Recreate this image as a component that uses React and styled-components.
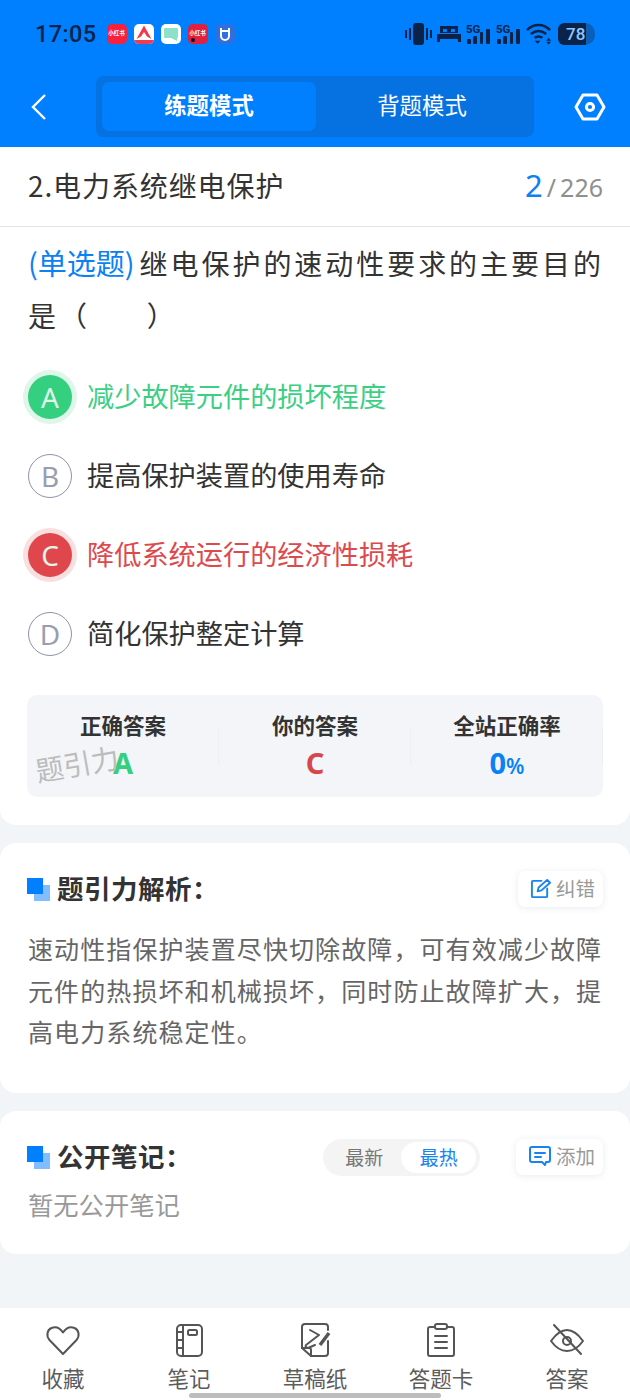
import React from "react";
import styled, { createGlobalStyle } from "styled-components";

const Global = createGlobalStyle`
  html, body { margin: 0; padding: 0; background: #f2f5f8; }
  * { box-sizing: border-box; }
  body { font-family: "Noto Sans", "Noto Sans CJK SC", sans-serif; }
`;
const Page = styled.div`
  width: 630px; height: 1400px; background: #f2f5f8; position: relative; overflow: hidden;
  display: flex; flex-direction: column;
`;
const Header = styled.header`
  background: #007fff; height: 147px; display: flex; flex-direction: column; flex: none;
`;
const StatusBar = styled.div`
  height: 76px; padding: 22px 35px 0 35px; display: flex; justify-content: space-between; align-items: flex-start;
`;
const Time = styled.span`
  font: 500 23.5px/24px "Roboto", sans-serif; color: #0b2348; letter-spacing: .4px; margin-right: 3px;
`;
const StatusLeft = styled.div`display: flex; align-items: center; height: 24px; gap: 7px;`;
const StatusRight = styled.div`display: flex; align-items: center; height: 24px; gap: 5px;`;
const AppIcon = styled.div`
  width: 20px; height: 20px; border-radius: 5px; background: ${p => p.$bg};
  display: flex; align-items: center; justify-content: center; overflow: hidden; position: relative;
  font: 700 5.5px/1 "Noto Sans CJK SC", sans-serif; color: #fff; white-space: nowrap; flex: none;
`;
const AppDot = styled.i`
  position: absolute; left: 3px; bottom: 2px; width: 4px; height: 4px; border-radius: 50%; background: #1a1020;
`;
const Battery = styled.div`
  width: 37px; height: 22px; border-radius: 6px 10px 10px 6px; margin-left: 1px; position: relative; overflow: hidden;
  background: #0a5fb8; color: #8ec8ff; display: flex; align-items: center;
  font: 500 17px/22px "Roboto", sans-serif; padding-left: 8px;
  &::before { content: ""; position: absolute; inset: 0 9px 0 0; background: #0b2348; border-radius: 6px 0 0 6px; }
  & > span { position: relative; }
`;
const NavRow = styled.div`
  height: 61px; display: flex; align-items: center; padding-left: 30px; padding-right: 24px;
`;
const BackBtn = styled.div`width: 66px; display: flex; flex: none;`;
const Segment = styled.div`
  width: 438px; height: 61px; background: #0671e0; border-radius: 8px; padding: 6px; display: flex; flex: none;
`;
const Tab = styled.div`
  flex: 0 0 ${p => p.$active ? "214px" : "212px"}; border-radius: 7px; background: ${p => p.$active ? "#007fff" : "transparent"};
  color: #fff; display: flex; align-items: center; justify-content: center; padding-bottom: 5px;
  font: ${p => p.$active ? 700 : 400} 22.4px/1 "Noto Sans CJK SC", sans-serif;
`;
const SettingBtn = styled.div`margin-left: auto; display: flex;`;

const Card = styled.section`
  background: #fff; border-radius: ${p => p.$top ? "0 0 16px 16px" : "16px"};
  flex: none; height: ${p => p.$h}px; margin-bottom: 18px; position: relative;
`;
const TitleRow = styled.div`
  height: 80px; padding: 0 27px 3px 28px; border-bottom: 1px solid #e3e3e3;
  display: flex; justify-content: space-between; align-items: center;
`;
const Title = styled.h1`
  margin: 0; font: 400 28px/1 "Noto Sans CJK SC", sans-serif; color: #333; letter-spacing: .9px;
`;
const Counter = styled.div`
  display: flex; align-items: baseline; color: #8f8f8f; font: 400 25px/1 "Noto Sans", sans-serif;
  b { font-weight: 400; font-size: 31px; color: #0a82f5; margin-right: 4px; }
  i { font-style: normal; margin-right: 4px; }
`;
const Question = styled.div`
  margin: 9px 0 0; padding: 0 20px 0 28px; font: 400 28px/53px "Noto Sans CJK SC", sans-serif; color: #333; letter-spacing: 2.95px;
`;
const QuestionLine = styled.div`height: 53px; white-space: nowrap;`;
const QuestionTag = styled.span`
  color: #0a82f5; letter-spacing: 0; margin-right: 5px; font-size: 29px;
`;
const QuestionBlank = styled.span`letter-spacing: 1.3px;`;
const Options = styled.div`
  display: flex; flex-direction: column; gap: 35px; margin-top: 33px; padding-left: 28px;
`;
const Option = styled.div`
  display: flex; align-items: center; gap: 15px; height: 44px; color: ${p => p.$color || "#333"};
  font: 400 27.2px/44px "Noto Sans CJK SC", sans-serif;
`;
const OptionText = styled.span`padding-bottom: 4px;`;
const Letter = styled.div`
  width: 44px; height: 44px; border-radius: 50%; flex: none; display: flex; align-items: center; justify-content: center;
  font: 400 28px/1 "Noto Sans", sans-serif;
  color: ${p => p.$fill ? "#dff5e8" : "#9a9db0"};
  background: ${p => p.$fill || "#fff"};
  border: ${p => p.$fill ? "none" : "1.5px solid #9092a8"};
  box-shadow: ${p => p.$ring ? `0 0 0 5px ${p.$ring}` : "none"};
`;
const Summary = styled.div`
  margin: 39px 27px 0; height: 102px; background: #f3f5f8; border-radius: 10px; display: grid;
  grid-template-columns: repeat(3, 1fr); padding-top: 15px; position: relative;
`;
const Stat = styled.div`
  display: flex; flex-direction: column; align-items: center; height: 62px; position: relative;
  &:not(:last-child)::after { content: ""; position: absolute; right: 0; top: 19px; height: 36px; width: 1px; background: #edeff2; }
`;
const StatLabel = styled.div`font: 700 21.5px/30px "Noto Sans CJK SC", sans-serif; color: #333;`;
const StatValue = styled.div`
  font: 700 29px/38px "Noto Sans", sans-serif; color: ${p => p.$color}; margin-top: 4px;
  small { font-size: 21px; font-weight: 600; }
`;
const Watermark = styled.div`
  position: absolute; left: 8px; top: 50px; transform: rotate(-10deg); color: #bcbcbc;
  font: 400 28px/36px "Noto Sans CJK SC", sans-serif; pointer-events: none;
`;
const SectionHead = styled.div`
  display: flex; align-items: center; padding: 0 27px; height: 36px; margin-top: 28px;
`;
const Squares = styled.div`
  width: 23px; height: 23px; position: relative; flex: none; margin-right: 7px; background: linear-gradient(#81bdff,#81bdff) 7px 7px/16px 16px no-repeat;
  &::after { content: ""; position: absolute; left: 0; top: 0; width: 16px; height: 16px; background: #007fff; }
`;
const SectionTitle = styled.h2`
  margin: 0; padding-bottom: 3px; font: 700 26.5px/36px "Noto Sans CJK SC", sans-serif; color: #333; flex: 1; letter-spacing: .5px; white-space: nowrap;
`;
const SmallBtn = styled.div`
  display: flex; align-items: center; gap: 5px; height: 36px; padding: 0 8px 2px ${p => p.$pl}px; border-radius: 7px; background: #fff;
  box-shadow: 0 1px 7px rgba(40,60,90,.1); color: #999; font: 400 19.5px/1 "Noto Sans CJK SC", sans-serif; white-space: nowrap;
`;
const Body = styled.p`
  margin: 21px 0 0; padding: 0 18px 0 28px; font: 400 25px/41.5px "Noto Sans CJK SC", sans-serif; color: #666; letter-spacing: 1.1px;
`;
const SortToggle = styled.div`
  display: flex; height: 37px; width: 157px; background: #f4f4f4; border-radius: 19px; padding: 3px 4px; margin-right: 36px; flex: none;
`;
const SortItem = styled.div`
  flex: 1; border-radius: 16px; background: ${p => p.$on ? "#fff" : "transparent"}; color: ${p => p.$on ? "#1a84ee" : "#777"};
  display: flex; align-items: center; justify-content: center; padding-bottom: 2px; font: 400 19px/1 "Noto Sans CJK SC", sans-serif;
`;
const Empty = styled.p`margin: 11px 0 0; padding: 0 28px; font: 400 25.3px/36px "Noto Sans CJK SC", sans-serif; color: #999;`;
const BottomBar = styled.nav`
  position: absolute; left: 0; right: 0; bottom: 0; height: 92px; background: #fff; display: flex; justify-content: space-between; padding: 14px 31px 0 31px;
`;
const BarItem = styled.div`
  display: flex; flex-direction: column; align-items: center; width: 64px; gap: 6px; white-space: nowrap;
  color: #5c5c5c; font: 400 21.5px/28px "Noto Sans CJK SC", sans-serif;
  svg { flex: none; }
`;
const HomeBar = styled.div`
  position: absolute; left: 189px; bottom: 2px; width: 252px; height: 5px; border-radius: 3px; background: #bdbdbd;
`;

const Ic = ({ children }) => (
  <svg width="36" height="36" viewBox="0 0 36 36" fill="none" stroke="#555" strokeWidth="2" strokeLinejoin="round" strokeLinecap="round">{children}</svg>
);
const Signal = () => (
  <svg width="25" height="22" viewBox="0 0 25 22" fill="#0b2348">
    <text x="0" y="9.500" fontSize="11.500" fontWeight="700" fontFamily="Roboto">5G</text>
    <rect x="1" y="16" width="4" height="5" rx="1"/><rect x="7" y="13" width="4" height="8" rx="1"/><rect x="14" y="9" width="3" height="12" rx="1"/><rect x="20" y="6" width="4" height="15" rx="1"/>
  </svg>
);

export default function App() {
  return (
    <Page>
      <Global />
      <Header>
        <StatusBar>
          <StatusLeft>
            <Time>17:05</Time>
            <AppIcon $bg="#f5213f">小红书</AppIcon>
            <AppIcon $bg="#fff">
              <svg width="20" height="20" viewBox="0 0 20 20"><path d="M10 1.500 17.500 15 13 12.500 10 8l-3 4.500L2.500 15z" fill="#ef3b4d"/><rect x="0" y="16" width="20" height="4" fill="#ef3b4d"/></svg>
            </AppIcon>
            <AppIcon $bg="#fff">
              <svg width="20" height="20" viewBox="0 0 20 20"><rect x="3" y="4" width="14" height="10" rx="1" fill="#8fe0c8"/><path d="M10 14h6v3z" fill="#8fe0c8"/></svg>
            </AppIcon>
            <AppIcon $bg="#e0203c">小红书<AppDot /></AppIcon>
            <AppIcon $bg="#2f6fe0">
              <svg width="20" height="20" viewBox="0 0 20 20" fill="none" stroke="#fff" strokeWidth="2"><path d="M6 4v8a4 4 0 0 0 8 0V4"/><path d="M5 7h10"/></svg>
            </AppIcon>
          </StatusLeft>
          <StatusRight>
            <svg width="27" height="22" viewBox="0 0 27 22" fill="#0b2348"><rect x="8" y="0" width="11" height="22" rx="3"/><rect x="0" y="7" width="2" height="8"/><rect x="4" y="5" width="2" height="12"/><rect x="21" y="5" width="2" height="12"/><rect x="25" y="7" width="2" height="8"/></svg>
            <svg width="24" height="22" viewBox="0 0 24 22" fill="#0b2348"><path d="M3 3h18v7H3z M0 11h24v8h-3v-3H3v3H0z"/><rect x="6" y="6" width="4" height="3" fill="#007fff"/><rect x="14" y="6" width="4" height="3" fill="#007fff"/></svg>
            <Signal />
            <Signal />
            <svg width="26" height="22" viewBox="0 0 27 22" fill="none" stroke="#0b2348" strokeWidth="2.600"><path d="M1 7c7-7 17-7 24 0"/><path d="M5 11c5-4 11-4 16 0"/><path d="M9 15c3-2 5-2 8 0"/><path d="M9 18l3 3 3-3z" fill="#0b2348" stroke="none"/><path d="M21 18h5l-2.500-3zM21 19h5l-2.500 3z" fill="#0b2348" stroke="none"/></svg>
            <Battery><span>78</span></Battery>
          </StatusRight>
        </StatusBar>
        <NavRow>
          <BackBtn>
            <svg width="18" height="28" viewBox="0 0 18 28" fill="none" stroke="#fff" strokeWidth="2.4"><path d="M15 2 3 14l12 12"/></svg>
          </BackBtn>
          <Segment>
            <Tab $active>练题模式</Tab>
            <Tab>背题模式</Tab>
          </Segment>
          <SettingBtn>
            <svg width="32" height="28" viewBox="0 0 32 28" fill="none" stroke="#fff" strokeWidth="3" strokeLinejoin="round"><path d="M9 2h14l7 12-7 12H9L2 14z"/><circle cx="16" cy="14" r="3.6"/></svg>
          </SettingBtn>
        </NavRow>
      </Header>

      <Card $top $h={678}>
        <TitleRow>
          <Title>2.电力系统继电保护</Title>
          <Counter><b>2</b><i>/</i>226</Counter>
        </TitleRow>
        <Question>
          <QuestionLine><QuestionTag>(单选题)</QuestionTag>继电保护的速动性要求的主要目的</QuestionLine>
          <QuestionLine>是<QuestionBlank>（　　）</QuestionBlank></QuestionLine>
        </Question>
        <Options>
          <Option $color="#3ccf84"><Letter $fill="#35cf80" $ring="#dff6ea">A</Letter><OptionText>减少故障元件的损坏程度</OptionText></Option>
          <Option><Letter>B</Letter><OptionText>提高保护装置的使用寿命</OptionText></Option>
          <Option $color="#dc4a4e"><Letter $fill="#e0474c" $ring="#f8e0e1">C</Letter><OptionText>降低系统运行的经济性损耗</OptionText></Option>
          <Option><Letter>D</Letter><OptionText>简化保护整定计算</OptionText></Option>
        </Options>
        <Summary>
          <Stat><StatLabel>正确答案</StatLabel><StatValue $color="#35cf80">A</StatValue></Stat>
          <Stat><StatLabel>你的答案</StatLabel><StatValue $color="#d5474b">C</StatValue></Stat>
          <Stat><StatLabel>全站正确率</StatLabel><StatValue $color="#0a82f5">0<small>%</small></StatValue></Stat>
          <Watermark>题引力</Watermark>
        </Summary>
      </Card>

      <Card $h={250}>
        <SectionHead>
          <Squares />
          <SectionTitle>题引力解析：</SectionTitle>
          <SmallBtn $pl={12}>
            <svg width="21" height="21" viewBox="0 0 22 22" fill="none" stroke="#1a84ee" strokeWidth="2" strokeLinecap="round" strokeLinejoin="round"><path d="M12 3H3a1 1 0 0 0-1 1v15a1 1 0 0 0 1 1h14a1 1 0 0 0 1-1v-8"/><path d="M8 14l1-4 9-8 3 3-9 8z"/></svg>
            纠错
          </SmallBtn>
        </SectionHead>
        <Body>速动性指保护装置尽快切除故障，可有效减少故障元件的热损坏和机械损坏，同时防止故障扩大，提高电力系统稳定性。</Body>
      </Card>

      <Card $h={143}>
        <SectionHead>
          <Squares />
          <SectionTitle>公开笔记：</SectionTitle>
          <SortToggle>
            <SortItem>最新</SortItem>
            <SortItem $on>最热</SortItem>
          </SortToggle>
          <SmallBtn $pl={13}>
            <svg width="22" height="20" viewBox="0 0 22 20" fill="none" stroke="#1a84ee" strokeWidth="2" strokeLinecap="round" strokeLinejoin="round"><path d="M3 1h16a2 2 0 0 1 2 2v11a2 2 0 0 1-2 2h-2l-1 3-3-3H3a2 2 0 0 1-2-2V3a2 2 0 0 1 2-2z"/><path d="M6 7h10M6 11h6"/></svg>
            添加
          </SmallBtn>
        </SectionHead>
        <Empty>暂无公开笔记</Empty>
      </Card>

      <BottomBar>
        <BarItem>
          <Ic><path d="M18 32 4.500 18C1 14 2 8 6.500 6c4-1.600 8.500 0 11.500 4.500C21 6 25.500 4.400 29.500 6c4.500 2 5.500 8 2 12z"/></Ic>
          收藏
        </BarItem>
        <BarItem>
          <Ic><rect x="6" y="3" width="25" height="31" rx="4"/><path d="M12 3v31M6 10h6M6 18h6M6 26h6"/><rect x="17" y="8" width="9" height="5" rx="1.500"/></Ic>
          笔记
        </BarItem>
        <BarItem>
          <Ic><path d="M31 8V5a3 3 0 0 0-3-3H8a3 3 0 0 0-3 3v21l9 8h14a3 3 0 0 0 3-3V19"/><path d="M5 26h7a2 2 0 0 1 2 2v6"/><path d="M13 8l9 5L9 23c-1 1 0 3 2 3l7-3"/><path d="M32 11 23 23" strokeWidth="3.500" strokeLinecap="butt"/></Ic>
          草稿纸
        </BarItem>
        <BarItem>
          <Ic><path d="M12 5H7a2 2 0 0 0-2 2v25a2 2 0 0 0 2 2h22a2 2 0 0 0 2-2V7a2 2 0 0 0-2-2h-5"/><rect x="12" y="2" width="12" height="5" rx="2"/><path d="M12 14h12M12 20h12M12 26h12"/></Ic>
          答题卡
        </BarItem>
        <BarItem>
          <Ic><path d="M2 19c5-7 10-11 16-11s11 4 16 11c-5 7-10 10-16 10S7 26 2 19z"/><circle cx="18" cy="19" r="4"/><path d="M5 3l27 29"/></Ic>
          答案
        </BarItem>
      </BottomBar>
      <HomeBar />
    </Page>
  );
}
